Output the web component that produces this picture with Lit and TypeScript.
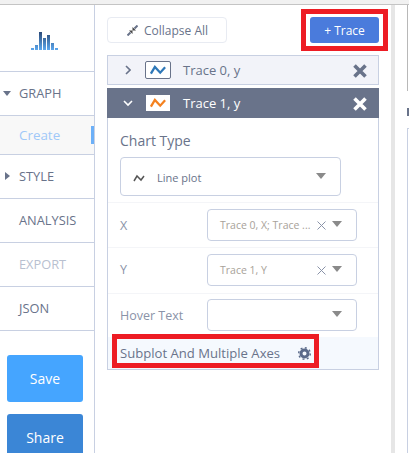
import { html, css, LitElement, svg } from 'lit';
import { customElement } from 'lit/decorators.js';

const lineIcon = (color: string) => svg`<path d="M5 13 L9.5 5.5 L15.5 12 L21 6" fill="none" stroke=${color} stroke-width="2.6" />`;

@customElement('app-root')
export class AppRoot extends LitElement {
	static styles = css`
		:host {
			display: block;
			width: 409px;
			height: 453px;
			overflow: hidden;
			background: #f1f1f1;
			font-family: "Open Sans", sans-serif;
			color: #69738a;
		}
		.page {
			display: flex;
			height: 449px;
			box-sizing: border-box;
			border-top: 1px solid #c4c4c4;
			margin-top: 4px;
			background: #fff;
		}
		.side {
			width: 94px;
			flex: none;
			border-right: 1px solid #c8d0e2;
		}
		.logo {
			height: 67px;
			box-sizing: border-box;
			padding: 6px 5px 0 0;
			display: flex;
			align-items: center;
			justify-content: center;
			border-bottom: 1px solid #c8d0e2;
		}
		.nav {
			position: relative;
			height: 44px;
			box-sizing: border-box;
			display: flex;
			align-items: center;
			padding: 0 0 2px 19px;
			border-bottom: 1px solid #c8d0e2;
			font-size: 12.8px;
		}
		.nav.create {
			height: 39px;
			padding-bottom: 0;
			background: #f8f8f8;
			color: #a0c8f8;
			font-size: 13.4px;
		}
		.nav.muted { color: #b8c0d0; }
		.marker {
			position: absolute;
			right: 0;
			top: 10px;
			width: 3px;
			height: 18px;
			background: #6cb0f8;
		}
		.arrow-down {
			position: absolute;
			left: 3px;
			top: 19px;
			border: 4px solid transparent;
			border-top: 5px solid #69738a;
			border-bottom: 0;
		}
		.arrow-right {
			position: absolute;
			left: 5px;
			top: 17px;
			border: 4px solid transparent;
			border-left: 5px solid #69738a;
			border-right: 0;
		}
		.actions {
			display: flex;
			flex-direction: column;
			gap: 12px;
			padding: 24px 11px 0 7px;
		}
		.btn {
			height: 47px;
			border-radius: 3px;
			color: #fff;
			font-size: 14px;
			display: flex;
			align-items: center;
			justify-content: center;
			background: #45a5ff;
		}
		.btn.share { background: #3b86d6; }
		.panel {
			width: 296px;
			flex: none;
			padding: 12px 0 0 12px;
			box-sizing: border-box;
		}
		.top {
			display: flex;
			align-items: center;
			justify-content: space-between;
			width: 272px;
			height: 26px;
			margin-bottom: 12px;
		}
		.collapse {
			width: 120px;
			height: 26px;
			box-sizing: border-box;
			border: 1px solid #e8ebf2;
			border-radius: 4px;
			display: flex;
			align-items: center;
			gap: 6px;
			padding-left: 19px;
			font-size: 12px;
		}
		.add {
			position: relative;
			width: 69px;
			height: 26px;
			border-radius: 3px;
			background: #4a7bdc;
			color: #fff;
			font-size: 12px;
			display: flex;
			align-items: center;
			justify-content: center;
		}
		.add::after {
			content: "";
			position: absolute;
			inset: -8px -9px;
			border: 5px solid #ed1c24;
		}
		.head {
			width: 272px;
			height: 30px;
			box-sizing: border-box;
			display: flex;
			align-items: center;
			font-size: 13px;
			position: relative;
		}
		.head.closed {
			background: #f2f3f9;
			box-shadow: inset 0 0 0 1px #c8d0e2;
			margin-bottom: 3px;
		}
		.head.open {
			background: #69738a;
			color: #fff;
		}
		.chev { width: 12px; margin: 0 11px 0 15px; display: flex; justify-content: center; }
		.thumb { width: 26px; height: 18px; box-sizing: border-box; margin-right: 12px; display: block; }
		.closed .thumb { border: 1px solid #69738a; border-radius: 2px; background: #fff; }
		.open .thumb { background: #fff; width: 24px; height: 16px; margin: 0 13px 0 1px; }
		.x { position: absolute; right: 12px; top: 9px; width: 14px; height: 14px; }
		.body {
			width: 272px;
			height: 252px;
			box-sizing: border-box;
			border: 1px solid #c8d0e2;
			border-top: 0;
			display: flex;
			flex-direction: column;
		}
		.chart {
			padding: 13px 12px 0;
			border-bottom: 1px solid #f4f5f8;
			height: 85px;
			box-sizing: border-box;
		}
		.chart label { display: block; font-size: 14px; line-height: 20px; margin-bottom: 6px; }
		.select {
			position: relative;
			box-sizing: border-box;
			border: 1px solid #c8d0e2;
			border-radius: 4px;
			display: flex;
			align-items: center;
			font-size: 10.5px;
		}
		.chart .select { width: 221px; height: 39px; padding: 2px 0 0 12px; gap: 12px; font-size: 11px; }
		.row {
			height: 45px;
			box-sizing: border-box;
			border-bottom: 1px solid #f4f5f8;
			display: flex;
			align-items: center;
			padding-left: 12px;
			font-size: 12.5px;
			color: #8a93a8;
		}
		.row.tall { height: 46px; align-items: flex-start; padding-top: 6px; }
		.row.last { border: 0; height: 43px; align-items: flex-start; padding-top: 5px; }
		.row span.name { width: 87px; flex: none; }
		.row.tall span.name { line-height: 32px; }
		.row.last span.name { line-height: 33px; }
		.row .select { width: 150px; height: 32px; padding-left: 12px; color: #a8a299; }
		.caret {
			position: absolute;
			right: 14px;
			top: 50%;
			margin-top: -4px;
			border: 5px solid transparent;
			border-top: 6px solid #8a8a8a;
			border-bottom: 0;
		}
		.clear { position: absolute; right: 30px; top: 50%; margin-top: -4px; width: 9px; height: 9px; }
		.sub {
			flex: 1;
			background: #f5f9fe;
			display: flex;
			align-items: center;
			padding-left: 12px;
			font-size: 13.1px;
			position: relative;
		}
		.sub::after {
			content: "";
			position: absolute;
			left: 4px;
			top: -3px;
			width: 207px;
			height: 34px;
			border: 5px solid #ed1c24;
			box-sizing: border-box;
		}
		.sub-inner { position: relative; z-index: 1; display: flex; align-items: center; gap: 18px; }
		.gutter { width: 4px; background: #e6e6e6; flex: none; }
		.right {
			flex: 1;
			padding-left: 12px;
			display: flex;
			flex-direction: column;
		}
		.grid { height: 86px; border-left: 1px solid #b8b8b8; }
		.strip { height: 8px; background: #69738a; margin-top: 17px; }
		.pane {
			flex: 1;
			margin-top: 12px;
			border-left: 1px solid #c8d0e2;
			border-top: 1px solid #c8d0e2;
		}
	`;

	render() {
		return html`<div class="page">
			<div class="side">
				<div class="logo">
					<svg width="27" height="18" viewBox="0 0 27 18">
						<defs><linearGradient id="g" gradientUnits="userSpaceOnUse" x1="0" y1="0" x2="0" y2="18"><stop offset="0" stop-color="#2b4a78" /><stop offset="1" stop-color="#5da8ee" /></linearGradient></defs>
						<path fill="url(#g)" d="M0 16h3v2H0zM4 13h3v5H4zM8 0h3v18H8zM12 6h3v12h-3zM16 3h3v15h-3zM20 11h3v7h-3zM24 16h3v2h-3z" />
					</svg>
				</div>
				<div class="nav"><i class="arrow-down"></i>GRAPH</div>
				<div class="nav create">Create<i class="marker"></i></div>
				<div class="nav"><i class="arrow-right"></i>STYLE</div>
				<div class="nav">ANALYSIS</div>
				<div class="nav muted">EXPORT</div>
				<div class="nav">JSON</div>
				<div class="actions">
					<div class="btn">Save</div>
					<div class="btn share">Share</div>
				</div>
			</div>
			<div class="panel">
				<div class="top">
					<div class="collapse">
						<svg width="11" height="11" viewBox="0 0 11 11"><path d="M0.5 10.5 L3.5 7.5 M10.5 0.5 L7.5 3.5" stroke="#69738a" stroke-width="2" /><path d="M2 5.5 L5.5 5.5 L5.5 9 Z M5.5 2 L5.5 5.5 L9 5.5 Z" fill="#444" /></svg>
						Collapse All
					</div>
					<div class="add">+ Trace</div>
				</div>
				<div class="head closed">
					<span class="chev"><svg width="6" height="10" viewBox="0 0 6 10"><path d="M1 1 L5 5 L1 9" fill="none" stroke="#69738a" stroke-width="1.6" /></svg></span>
					<svg class="thumb" viewBox="0 0 26 18">${lineIcon('#2f78b8')}</svg>
					Trace 0, y
					<svg class="x" viewBox="0 0 14 14"><path d="M1.5 1.5 L12.5 12.5 M12.5 1.5 L1.5 12.5" stroke="#69738a" stroke-width="3.6" /></svg>
				</div>
				<div class="head open">
					<span class="chev"><svg width="10" height="8" viewBox="0 0 10 8"><path d="M1 2 L5 6 L9 2" fill="none" stroke="#fff" stroke-width="1.6" /></svg></span>
					<svg class="thumb" viewBox="0 0 26 18">${lineIcon('#f4811f')}</svg>
					Trace 1, y
					<svg class="x" viewBox="0 0 14 14"><path d="M1.5 1.5 L12.5 12.5 M12.5 1.5 L1.5 12.5" stroke="#fff" stroke-width="3.6" /></svg>
				</div>
				<div class="body">
					<div class="chart">
						<label>Chart Type</label>
						<div class="select">
							<svg width="12" height="8" viewBox="0 0 12 8"><path d="M1 7 L4 2 L8 6 L11 2" fill="none" stroke="#555" stroke-width="1.5" /></svg>
							Line plot
							<i class="caret"></i>
						</div>
					</div>
					<div class="row">
						<span class="name">X</span>
						<div class="select">Trace 0, X; Trace ...
							<svg class="clear" viewBox="0 0 9 9"><path d="M0.5 0.5 L8.5 8.5 M8.5 0.5 L0.5 8.5" stroke="#8a93a8" /></svg>
							<i class="caret"></i>
						</div>
					</div>
					<div class="row tall">
						<span class="name">Y</span>
						<div class="select">Trace 1, Y
							<svg class="clear" viewBox="0 0 9 9"><path d="M0.5 0.5 L8.5 8.5 M8.5 0.5 L0.5 8.5" stroke="#8a93a8" /></svg>
							<i class="caret"></i>
						</div>
					</div>
					<div class="row last">
						<span class="name">Hover Text</span>
						<div class="select"><i class="caret"></i></div>
					</div>
					<div class="sub">
						<div class="sub-inner">
							<span>Subplot And Multiple Axes</span>
							<svg width="13" height="13" viewBox="0 0 13 13"><circle cx="6.5" cy="6.5" r="3.5" fill="none" stroke="#5a6a8a" stroke-width="3" /><circle cx="6.5" cy="6.5" r="5.8" fill="none" stroke="#5a6a8a" stroke-width="1.4" stroke-dasharray="2 2.5" /></svg>
						</div>
					</div>
				</div>
			</div>
			<div class="gutter"></div>
			<div class="right"><div class="grid"></div><div class="strip"></div><div class="pane"></div></div>
		</div>`;
	}
}

declare global {
	interface HTMLElementTagNameMap {
		"app-root": AppRoot,
	}
}
